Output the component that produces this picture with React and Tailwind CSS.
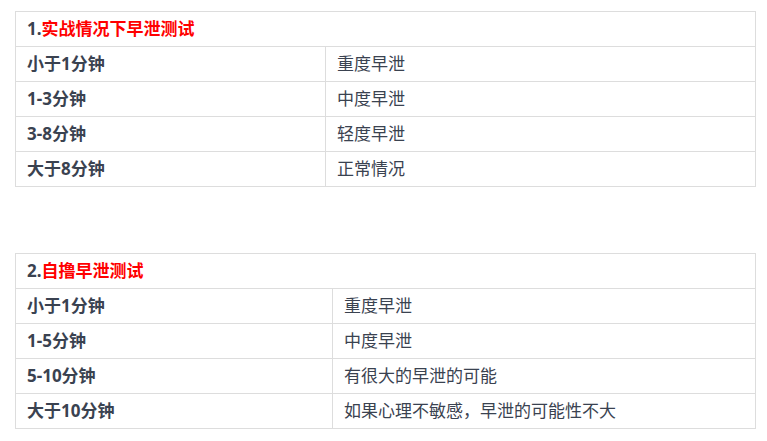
import React from "react";

const font = { fontFamily: '"Noto Sans", "Noto Sans CJK SC", sans-serif' };

function Table({ num, title, rows, col }) {
  return (
    <div className="w-[741px] border border-[#dddddd] border-b-0">
      <div className="h-[35px] border-b border-[#dddddd] flex items-center pl-[11px] text-[17px] font-bold">
        <span className="text-[#3a4250]">{num}.</span>
        <span className="text-[#ff0000]">{title}</span>
      </div>
      {rows.map(([a, b], i) => (
        <div key={i} className="h-[35px] border-b border-[#dddddd] flex">
          <div className={`${col} flex items-center pl-[11px] font-bold text-[17px] text-[#3a4250] border-r border-[#dddddd]`}>
            {a}
          </div>
          <div className="flex-1 flex items-center pl-[11px] text-[17px] text-[#3a4250]">{b}</div>
        </div>
      ))}
    </div>
  );
}

export default function App() {
  return (
    <div className="w-[767px] h-[441px] bg-white pt-[11px] pl-[15px]" style={font}>
      <Table
        num="1"
        title="实战情况下早泄测试"
        col="w-[310px]"
        rows={[
          ["小于1分钟", "重度早泄"],
          ["1-3分钟", "中度早泄"],
          ["3-8分钟", "轻度早泄"],
          ["大于8分钟", "正常情况"],
        ]}
      />
      <div className="h-[66px]" />
      <Table
        num="2"
        title="自撸早泄测试"
        col="w-[317px]"
        rows={[
          ["小于1分钟", "重度早泄"],
          ["1-5分钟", "中度早泄"],
          ["5-10分钟", "有很大的早泄的可能"],
          ["大于10分钟", "如果心理不敏感，早泄的可能性不大"],
        ]}
      />
    </div>
  );
}
